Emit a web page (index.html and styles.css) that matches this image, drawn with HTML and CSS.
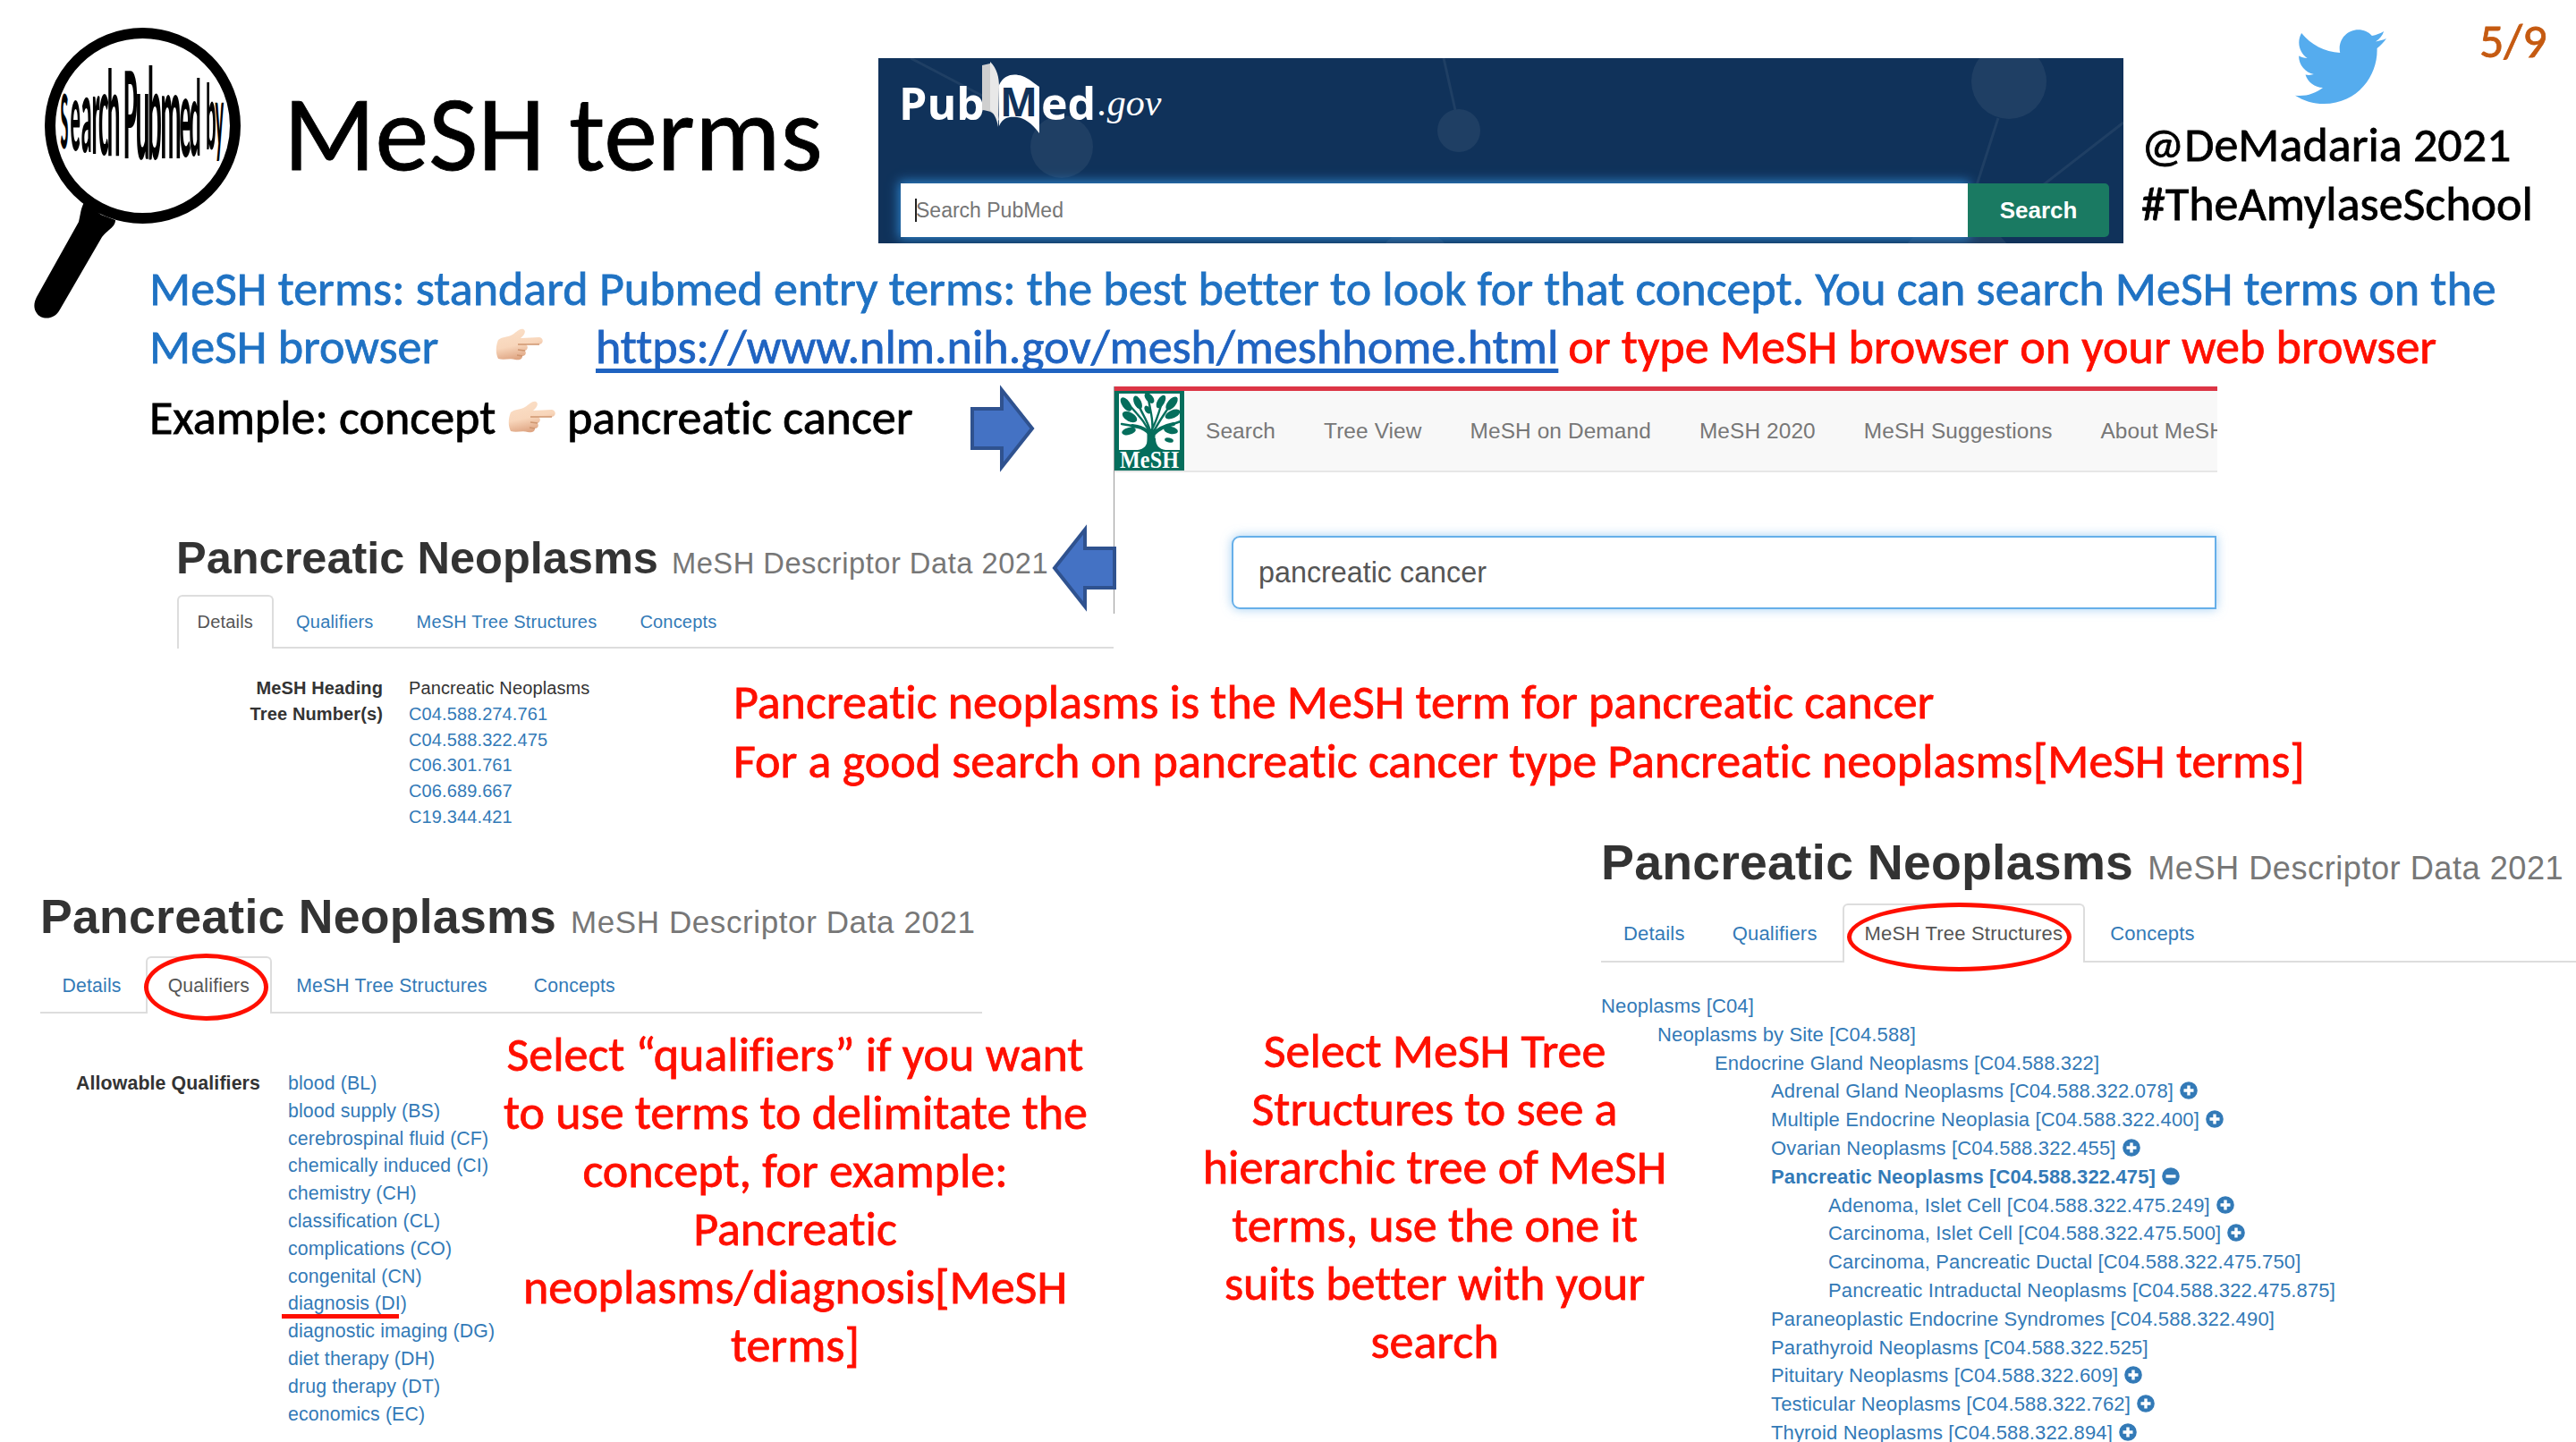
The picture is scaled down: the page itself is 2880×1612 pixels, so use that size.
FILE: index.html
```html
<!doctype html>
<html lang="en">
  <head>
    <meta charset="utf-8">
    <link rel="stylesheet" href="styles.css">
    <title>MeSH terms</title>
  </head>
  <body>
    <svg class="defs" width="0" height="0">
      <defs>
        <linearGradient id="skin" x1="0" y1="0" x2="0.3" y2="1">
          <stop offset="0" stop-color="#fbe0c8"/>
          <stop offset="0.6" stop-color="#f8d6bb"/>
          <stop offset="1" stop-color="#dfa684"/>
        </linearGradient>
        <symbol id="hand" viewBox="0 0 53 36">
          <path d="M3 13 C8 9 14 10 19 7 C24 4 27 0 31 1 C35 3 32 8 28 11 L49 10 C54 11 54 17 49 18 L34 18 C37 20 36 24 33 25 C35 28 33 31 30 31 C30 35 26 36 22 35 C16 33 10 36 3 34 C0 28 0 20 3 13 Z" fill="url(#skin)"/>
          <path d="M49 18 L25 18 M33 25 L25 24 M30 31 L24 30" stroke="#cf9670" stroke-width="1.4" fill="none"/>
        </symbol>
        <symbol id="plus" viewBox="0 0 20 20">
          <circle cx="10" cy="10" r="9.8" fill="#337ab7"/>
          <path d="M10 4.5 V15.5 M4.5 10 H15.5" stroke="#fff" stroke-width="3.4"/>
        </symbol>
        <symbol id="minus" viewBox="0 0 20 20">
          <circle cx="10" cy="10" r="9.8" fill="#337ab7"/>
          <path d="M4.5 10 H15.5" stroke="#fff" stroke-width="3.4"/>
        </symbol>
      </defs>
    </svg>

    <div id="slide">
      <header class="header">
        <svg class="magnifier" viewBox="0 0 290 370">
          <circle cx="159.5" cy="140.5" r="103.5" fill="none" stroke="#000" stroke-width="12"/>
          <path d="M94 226 L113 240 L129 246 C129 254 121 256 114 265 L67 346 C61 358 46 358 41 350 C37 344 38 338 41 332 L88 248 C90 240 90 234 94 226 Z"/>
          <text class="lens-text" transform="scale(0.2 1)"><tspan x="338" y="166" font-size="94">S</tspan><tspan x="392" y="168" font-size="114">e</tspan><tspan x="453" y="170" font-size="124">a</tspan><tspan x="512" y="172" font-size="132">r</tspan><tspan x="550" y="173" font-size="138">c</tspan><tspan x="598" y="174" font-size="140">h </tspan><tspan x="690" y="177" font-size="150">P</tspan><tspan x="757" y="178" font-size="150">u</tspan><tspan x="824" y="178" font-size="150">b</tspan><tspan x="896" y="177" font-size="144">m</tspan><tspan x="1002" y="175" font-size="132">e</tspan><tspan x="1058" y="174" font-size="124">d </tspan><tspan x="1150" y="167" font-size="108">b</tspan><tspan x="1202" y="164" font-size="102">y</tspan></text>
        </svg>
        <h1>MeSH terms</h1>

        <div class="pubmed">
          <svg class="pubmed-bg" viewBox="0 0 1392 207">
            <g fill="#1f3f64">
              <circle cx="205" cy="99" r="35"/>
              <circle cx="649" cy="81" r="24"/>
              <circle cx="1264" cy="26" r="42"/>
              <circle cx="600" cy="233" r="42"/>
              <circle cx="1206" cy="250" r="70"/>
            </g>
            <path d="M36 0 L120 44 M632 0 L645 58 M1252 67 L1228 142 M1392 72 L1302 142" stroke="#1f3f64" stroke-width="3" fill="none"/>
          </svg>
          <div class="pubmed-logo">
            <span class="pub">Pub</span>
            <svg class="book" viewBox="0 0 66 82">
              <path d="M1 4 L10 2 L20 66 L17 62 C12 55 8 55 1 54 Z" fill="#cfcfcf"/>
              <path d="M10 0 C18 8 20 18 20 28 L19 73 C17 62 14 58 10 54 Z" fill="#e8e8e8"/>
              <path d="M20 26 C26 14 36 13 46 16 C54 19 60 25 65 28 V80 C56 68 48 63 40 62 C32 61 24 62 20 72 Z" fill="#fff"/>
              <text x="21" y="61" textLength="42" lengthAdjust="spacingAndGlyphs" class="book-m">M</text>
            </svg>
            <span class="ed">ed</span><span class="gov">.gov</span>
          </div>
          <div class="pubmed-search">
            <div class="pubmed-input"><i class="caret"></i><span>Search PubMed</span></div>
            <div class="pubmed-btn">Search</div>
          </div>
        </div>

        <div class="author">
          <div class="author-top">
            <svg class="bird" viewBox="0 0 102 85">
              <path fill="#55acee" d="M102 10.1 C98.200 11.800 94.200 12.900 90 13.400 C94.300 10.800 97.600 6.700 99.200 1.900 C95.100 4.300 90.700 6 85.900 6.900 C82.100 2.800 76.700 0.300 70.600 0.300 C59 0.300 49.700 9.700 49.700 21.200 C49.700 22.900 49.900 24.500 50.200 26 C32.800 25.100 17.400 16.800 7.100 4.100 C5.300 7.200 4.300 10.800 4.300 14.600 C4.300 21.900 8 28.300 13.600 32 C10.200 31.900 7 30.900 4.100 29.400 V29.600 C4.100 39.800 11.300 48.200 20.900 50.100 C19.100 50.600 17.300 50.900 15.400 50.900 C14.100 50.900 12.800 50.700 11.500 50.500 C14.100 58.800 21.900 64.900 31 65 C23.900 70.600 14.900 74 5 74 C3.300 74 1.700 73.900 0 73.700 C9.300 79.600 20.300 83.100 32.100 83.100 C70.600 83.100 91.600 51.200 91.600 23.600 V20.900 C95.700 17.900 99.200 14.200 102 10.100 Z"/>
            </svg>
            <span class="page">5/9</span>
          </div>
          <p class="handle">@DeMadaria 2021</p>
          <p class="hashtag">#TheAmylaseSchool</p>
        </div>
      </header>

      <div class="intro">
        <p class="intro-first">MeSH terms: standard Pubmed entry terms: the best better to look for that concept. You can search MeSH terms on the</p>
        <p class="intro-second">
          <span class="browser">MeSH browser</span>
          <svg class="hand"><use href="#hand"/></svg>
          <a class="mesh-link">https://www.nlm.nih.gov/mesh/meshhome.html</a>
          <span class="or-type">or type MeSH browser on your web browser</span>
        </p>
      </div>

      <div class="top-row">
        <div class="top-left">
          <p class="example">
            <span class="concept">Example: concept</span>
            <svg class="hand"><use href="#hand"/></svg>
            <span class="cancer">pancreatic cancer</span>
            <svg class="arrow" viewBox="0 0 74 98">
              <path d="M3 27 H36 V6 L70 49 L36 92 V71 H3 Z"/>
            </svg>
          </p>
          <div class="descriptor details">
            <h2><b>Pancreatic Neoplasms</b><small>MeSH Descriptor Data 2021</small></h2>
            <ul class="tabs">
              <li class="active">Details</li>
              <li>Qualifiers</li>
              <li>MeSH Tree Structures</li>
              <li>Concepts</li>
            </ul>
          </div>
        </div>
        <div class="mesh-window">
          <nav>
            <svg class="mesh-logo" viewBox="0 0 78 92">
              <rect width="78" height="92" fill="#056e5c"/>
              <rect x="5" y="4" width="68" height="63" fill="#fff"/>
              <g stroke="#056e5c" fill="none" stroke-linecap="round">
                <path d="M41 67 V48" stroke-width="9"/>
                <path d="M40 50 C36 44 30 41 20 40 M43 50 C48 44 56 40 66 38" stroke-width="4"/>
                <path d="M40 50 C34 34 26 28 14 14 M40 46 C36 32 30 26 26 14 M42 46 C44 34 40 24 38 10 M43 48 C50 34 58 24 64 14 M42 44 C48 32 50 24 53 14 M20 40 L8 38 M60 40 L74 35" stroke-width="2.4"/>
              </g>
              <g fill="#056e5c">
                <ellipse cx="13" cy="16" rx="9" ry="4.500" transform="rotate(55 13 16)"/>
                <ellipse cx="26" cy="14" rx="8" ry="4" transform="rotate(65 26 14)"/>
                <ellipse cx="39" cy="9" rx="7" ry="4" transform="rotate(50 39 9)"/>
                <ellipse cx="52" cy="13" rx="8" ry="4" transform="rotate(-60 52 13)"/>
                <ellipse cx="64" cy="15" rx="9" ry="4.500" transform="rotate(-50 64 15)"/>
                <ellipse cx="37" cy="22" rx="5" ry="3" transform="rotate(60 37 22)"/>
                <ellipse cx="17" cy="30" rx="9" ry="5" transform="rotate(30 17 30)"/>
                <ellipse cx="65" cy="27" rx="9" ry="4.500" transform="rotate(-25 65 27)"/>
                <ellipse cx="16" cy="46" rx="8" ry="4" transform="rotate(-15 16 46)"/>
                <ellipse cx="63" cy="45" rx="8" ry="4" transform="rotate(10 63 45)"/>
                <ellipse cx="61" cy="56" rx="5" ry="2.500" transform="rotate(15 61 56)"/>
                <path d="M26 67 C33 66 37 62 37 54 H46 C46 62 50 66 57 67 Z"/>
              </g>
              <text x="39" y="87" text-anchor="middle" textLength="66" lengthAdjust="spacingAndGlyphs" class="mesh-logo-text">MeSH</text>
            </svg>
            <span>Search</span>
            <span>Tree View</span>
            <span>MeSH on Demand</span>
            <span>MeSH 2020</span>
            <span>MeSH Suggestions</span>
            <span>About MeSH</span>
          </nav>
          <div class="mesh-input">pancreatic cancer</div>
          <svg class="arrow arrow-left" viewBox="0 0 74 98">
            <path d="M71 27 H38 V6 L4 49 L38 92 V71 H71 Z"/>
          </svg>
        </div>
      </div>

      <div class="middle-row">
        <dl class="heading-list">
          <dt>MeSH Heading</dt>
          <dd>Pancreatic Neoplasms</dd>
          <dt>Tree Number(s)</dt>
          <dd>
            <a>C04.588.274.761</a>
            <a>C04.588.322.475</a>
            <a>C06.301.761</a>
            <a>C06.689.667</a>
            <a>C19.344.421</a>
          </dd>
        </dl>
        <div class="note note-middle">
          <p>Pancreatic neoplasms is the MeSH term for pancreatic cancer</p>
          <p>For a good search on pancreatic cancer type Pancreatic neoplasms[MeSH terms]</p>
        </div>
      </div>

      <div class="bottom-row">
        <div class="descriptor qualifiers">
          <h2><b>Pancreatic Neoplasms</b><small>MeSH Descriptor Data 2021</small></h2>
          <ul class="tabs">
            <li>Details</li>
            <li class="active">Qualifiers<i class="ring"></i></li>
            <li>MeSH Tree Structures</li>
            <li>Concepts</li>
          </ul>
          <div class="qualifiers-body">
            <dl class="qualifier-list">
              <dt>Allowable Qualifiers</dt>
              <dd>
                <a>blood (BL)</a>
                <a>blood supply (BS)</a>
                <a>cerebrospinal fluid (CF)</a>
                <a>chemically induced (CI)</a>
                <a>chemistry (CH)</a>
                <a>classification (CL)</a>
                <a>complications (CO)</a>
                <a>congenital (CN)</a>
                <a class="marked">diagnosis (DI)</a>
                <a>diagnostic imaging (DG)</a>
                <a>diet therapy (DH)</a>
                <a>drug therapy (DT)</a>
                <a>economics (EC)</a>
              </dd>
            </dl>
            <p class="note note-qualifiers">Select “qualifiers” if you want<br>to use terms to delimitate the<br>concept, for example:<br>Pancreatic<br>neoplasms/diagnosis[MeSH<br>terms]</p>
          </div>
        </div>

        <p class="note note-tree">Select MeSH Tree<br>Structures to see a<br>hierarchic tree of MeSH<br>terms, use the one it<br>suits better with your<br>search</p>

        <div class="descriptor tree-structures">
          <h2><b>Pancreatic Neoplasms</b><small>MeSH Descriptor Data 2021</small></h2>
          <ul class="tabs">
            <li>Details</li>
            <li>Qualifiers</li>
            <li class="active">MeSH Tree Structures<i class="ring"></i></li>
            <li>Concepts</li>
          </ul>
          <ul class="tree">
            <li>Neoplasms [C04]</li>
            <li class="l1">Neoplasms by Site [C04.588]</li>
            <li class="l2">Endocrine Gland Neoplasms [C04.588.322]</li>
            <li class="l3">Adrenal Gland Neoplasms [C04.588.322.078]<svg><use href="#plus"/></svg></li>
            <li class="l3">Multiple Endocrine Neoplasia [C04.588.322.400]<svg><use href="#plus"/></svg></li>
            <li class="l3">Ovarian Neoplasms [C04.588.322.455]<svg><use href="#plus"/></svg></li>
            <li class="l3 current">Pancreatic Neoplasms [C04.588.322.475]<svg><use href="#minus"/></svg></li>
            <li class="l4">Adenoma, Islet Cell [C04.588.322.475.249]<svg><use href="#plus"/></svg></li>
            <li class="l4">Carcinoma, Islet Cell [C04.588.322.475.500]<svg><use href="#plus"/></svg></li>
            <li class="l4">Carcinoma, Pancreatic Ductal [C04.588.322.475.750]</li>
            <li class="l4">Pancreatic Intraductal Neoplasms [C04.588.322.475.875]</li>
            <li class="l3">Paraneoplastic Endocrine Syndromes [C04.588.322.490]</li>
            <li class="l3">Parathyroid Neoplasms [C04.588.322.525]</li>
            <li class="l3">Pituitary Neoplasms [C04.588.322.609]<svg><use href="#plus"/></svg></li>
            <li class="l3">Testicular Neoplasms [C04.588.322.762]<svg><use href="#plus"/></svg></li>
            <li class="l3">Thyroid Neoplasms [C04.588.322.894]<svg><use href="#plus"/></svg></li>
          </ul>
        </div>
      </div>
    </div>
  </body>
</html>
```
FILE: styles.css
```css
* {
  box-sizing: border-box;
}

body, h1, h2, p, ul, dl, dd {
  margin: 0;
  padding: 0;
}

body {
  background: #fff;
  font-family: Carlito, Calibri, Lato, sans-serif;
  font-size: 54px;
  font-variant-ligatures: none;
  line-height: 65px;
  white-space: nowrap;
}

ul {
  list-style: none;
}

.defs {
  display: block;
}

#slide {
  width: 2880px;
  height: 1612px;
  overflow: hidden;
}

h1, .author, .intro, .example, .note {
  -webkit-text-stroke: 0.8px currentColor;
}

/* header */

.header {
  display: flex;
  height: 291px;
}

.magnifier {
  width: 290px;
  height: 370px;
  flex: none;
}

.lens-text {
  font-weight: bold;
}

h1 {
  width: 692px;
  padding: 76px 0 0 27px;
  font-size: 120px;
  font-weight: normal;
  line-height: 146px;
}

.pubmed {
  position: relative;
  width: 1392px;
  height: 207px;
  margin-top: 65px;
  padding: 0 16px 0 25px;
  background: #10325a;
  overflow: hidden;
  flex: none;
}

.pubmed-bg {
  position: absolute;
  left: 0;
  top: 0;
  width: 1392px;
  height: 207px;
}

.pubmed-logo {
  position: relative;
  display: flex;
  height: 140px;
  color: #fff;
  font-family: "Open Sans", sans-serif;
  font-weight: bold;
  font-size: 50px;
  line-height: 100px;
}

.pub {
  width: 92px;
  margin-left: -2px;
}

.book {
  width: 66px;
  height: 82px;
  margin-top: 4px;
}

.book-m {
  font-family: "Open Sans", sans-serif;
  font-size: 44px;
  font-weight: bold;
  fill: #10325a;
}

.ed {
  margin-left: 1px;
}

.gov {
  margin-left: 2px;
  font-family: "Liberation Serif", serif;
  font-style: italic;
  font-weight: normal;
  font-size: 42px;
}

.pubmed-search {
  position: relative;
  display: flex;
  height: 60px;
  font-family: "Liberation Sans", sans-serif;
  font-size: 23px;
  line-height: 60px;
}

.pubmed-input {
  display: flex;
  align-items: center;
  width: 1193px;
  padding-left: 16px;
  color: #757575;
  background: #fff;
  box-shadow: 0 0 12px 2px #2f86cf;
}

.caret {
  width: 2px;
  height: 26px;
  margin-right: -1px;
  background: #222;
}

.pubmed-btn {
  width: 158px;
  background: #1a7a62;
  border-radius: 0 5px 5px 0;
  color: #fff;
  font-weight: bold;
  font-size: 26px;
  text-align: center;
  z-index: 1;
}

.author {
  padding: 0 0 0 20px;
  width: 506px;
}

.author-top {
  display: flex;
  height: 130px;
}

.bird {
  width: 102px;
  height: 85px;
  margin: 33px 104px 0 172px;
}

.page {
  margin-top: 14px;
  color: #c55a11;
}

.hashtag {
  padding-top: 1px;
}

/* intro lines */

.intro {
  height: 141px;
  padding-left: 167px;
  color: #1f72c3;
}

.intro-second {
  display: flex;
}

.browser {
  width: 387px;
}

.hand {
  width: 53px;
  height: 36px;
}

.intro .hand {
  margin: 11px 59px 0 0;
}

.mesh-link {
  color: #1f63c1;
  text-decoration: underline;
  text-decoration-thickness: 5px;
  text-decoration-skip-ink: none;
  text-underline-offset: 6px;
}

.or-type {
  margin-left: 11px;
  color: #ff0f00;
}

/* example, search window */

.top-row {
  display: grid;
  grid-template-columns: 1245px 1234px;
  height: 318px;
}

.example {
  display: flex;
  height: 168px;
  padding-left: 167px;
}

.concept {
  width: 401px;
  padding-top: 3px;
}

.example .hand {
  margin: 16px 13px 0 0;
}

.cancer {
  width: 450px;
  padding-top: 3px;
}

.arrow {
  width: 74px;
  height: 98px;
  margin-top: -2px;
  fill: #4472c4;
  stroke: #2f528f;
  stroke-width: 4px;
}

.mesh-window {
  position: relative;
  height: 254px;
  border-left: 1px solid #999;
  font-family: "Liberation Sans", sans-serif;
}

.mesh-window nav {
  display: flex;
  gap: 54px;
  height: 96px;
  border-top: 5px solid #dc3545;
  border-bottom: 2px solid #e7e7e7;
  background: #f8f8f8;
  color: #777;
  font-size: 24.4px;
  letter-spacing: 0.12px;
  line-height: 90px;
  overflow: hidden;
}

.mesh-logo {
  width: 78px;
  height: 92px;
  margin: -1px -30px 0 0;
  flex: none;
}

.mesh-logo-text {
  font-family: "Liberation Serif", serif;
  font-weight: bold;
  font-size: 27px;
  fill: #fff;
}

.mesh-input {
  height: 82px;
  margin: 71px 1px 0 131px;
  padding-left: 28px;
  border: 2px solid #66afe9;
  border-radius: 9px 0 0 9px;
  box-shadow: 0 0 12px rgba(102, 175, 233, 0.6);
  color: #555;
  font-size: 32.3px;
  line-height: 78px;
}

.arrow-left {
  position: absolute;
  left: -71px;
  top: 154px;
  margin: 0;
}

/* descriptor pages */

.descriptor {
  font-family: "Liberation Sans", sans-serif;
  color: #333;
}

.descriptor h2 {
  font-weight: normal;
}

.descriptor small {
  color: #777;
}

.tabs {
  display: flex;
  border-bottom: 2px solid #ddd;
  letter-spacing: 0.2px;
}

.tabs li {
  position: relative;
  border: 2px solid transparent;
  border-bottom: 0;
  color: #337ab7;
}

.tabs .active {
  margin-bottom: -2px;
  border-color: #ddd;
  border-radius: 6px 6px 0 0;
  background: #fff;
  color: #555;
}

.ring {
  position: absolute;
  border: 5px solid #ff0f00;
  border-radius: 50%;
}

.details {
  width: 1047px;
  margin-left: 198px;
}

.details h2 {
  height: 65px;
  font-size: 50.5px;
  line-height: 48px;
}

.details b {
  margin-left: -1px;
}

.details small {
  margin-left: 15px;
  font-size: 32.7px;
  letter-spacing: 0.5px;
}

.details .tabs {
  height: 60px;
  gap: 3px;
  font-size: 20px;
  line-height: 57px;
}

.details .tabs li {
  padding: 0 20.5px;
}

/* heading list + red note */

.middle-row {
  display: flex;
  height: 180px;
}

.heading-list {
  display: grid;
  grid-template-columns: 428px 1fr;
  column-gap: 29px;
  align-content: start;
  width: 820px;
  padding-top: 5px;
  color: #333;
  font-family: "Liberation Sans", sans-serif;
  font-size: 20px;
  letter-spacing: 0.12px;
  line-height: 28.8px;
}

dt {
  font-weight: bold;
  text-align: right;
}

dd a {
  display: block;
  color: #337ab7;
}

.note {
  color: #ff0f00;
  font-family: Carlito, Calibri, Lato, sans-serif;
  font-size: 54px;
  line-height: 65px;
}

.note-middle {
  padding-top: 2px;
  line-height: 66px;
}

/* bottom row */

.bottom-row {
  display: grid;
  grid-template-columns: 1344px 446px 1090px;
  height: 682px;
}

.qualifiers {
  width: 1053px;
  margin: 66px 0 0 45px;
}

.qualifiers h2 {
  height: 73px;
  font-size: 53.6px;
  letter-spacing: 0.25px;
  line-height: 56px;
}

.qualifiers small {
  margin-left: 16px;
  font-size: 35px;
  letter-spacing: 0.6px;
}

.qualifiers .tabs {
  height: 64px;
  gap: 3px;
  font-size: 21.2px;
  line-height: 62px;
}

.qualifiers .tabs li {
  padding: 0 22.5px;
}

.qualifiers .ring {
  left: -4px;
  top: -5px;
  width: 139px;
  height: 75px;
}

.qualifiers-body {
  display: flex;
}

.qualifier-list {
  display: grid;
  grid-template-columns: 246px 196px;
  column-gap: 31px;
  padding-top: 63px;
  font-size: 21.3px;
  letter-spacing: 0.12px;
  line-height: 30.8px;
}

.marked {
  position: relative;
}

.marked::after {
  content: "";
  position: absolute;
  left: -7px;
  top: 27px;
  width: 131px;
  height: 5px;
  background: #ff0f00;
}

.note-qualifiers {
  width: 652px;
  margin: 14px 0 0 45px;
  text-align: center;
}

.note-tree {
  width: 520px;
  margin-top: 213px;
  text-align: center;
}

.tree-structures {
  padding-top: 3px;
  z-index: 1;
}

.tree-structures h2 {
  height: 77px;
  font-size: 55.4px;
  letter-spacing: 0.2px;
  line-height: 62px;
}

.tree-structures small {
  margin-left: 16px;
  font-size: 36.2px;
  letter-spacing: 0.5px;
}

.tree-structures .tabs {
  height: 66px;
  gap: 3px;
  font-size: 22px;
  line-height: 64px;
}

.tree-structures .tabs li {
  padding: 0 23px;
}

.tree-structures .ring {
  left: 3px;
  top: -3px;
  width: 251px;
  height: 77px;
}

.tree {
  padding-top: 33px;
  color: #337ab7;
  font-size: 22px;
  letter-spacing: 0.15px;
  line-height: 31.8px;
}

.tree svg {
  width: 20px;
  height: 20px;
  margin-left: 7px;
  vertical-align: -2px;
}

.l1 {
  padding-left: 63px;
}

.l2 {
  padding-left: 127px;
}

.l3 {
  padding-left: 190px;
}

.l4 {
  padding-left: 254px;
}

.current {
  font-weight: bold;
}
```
